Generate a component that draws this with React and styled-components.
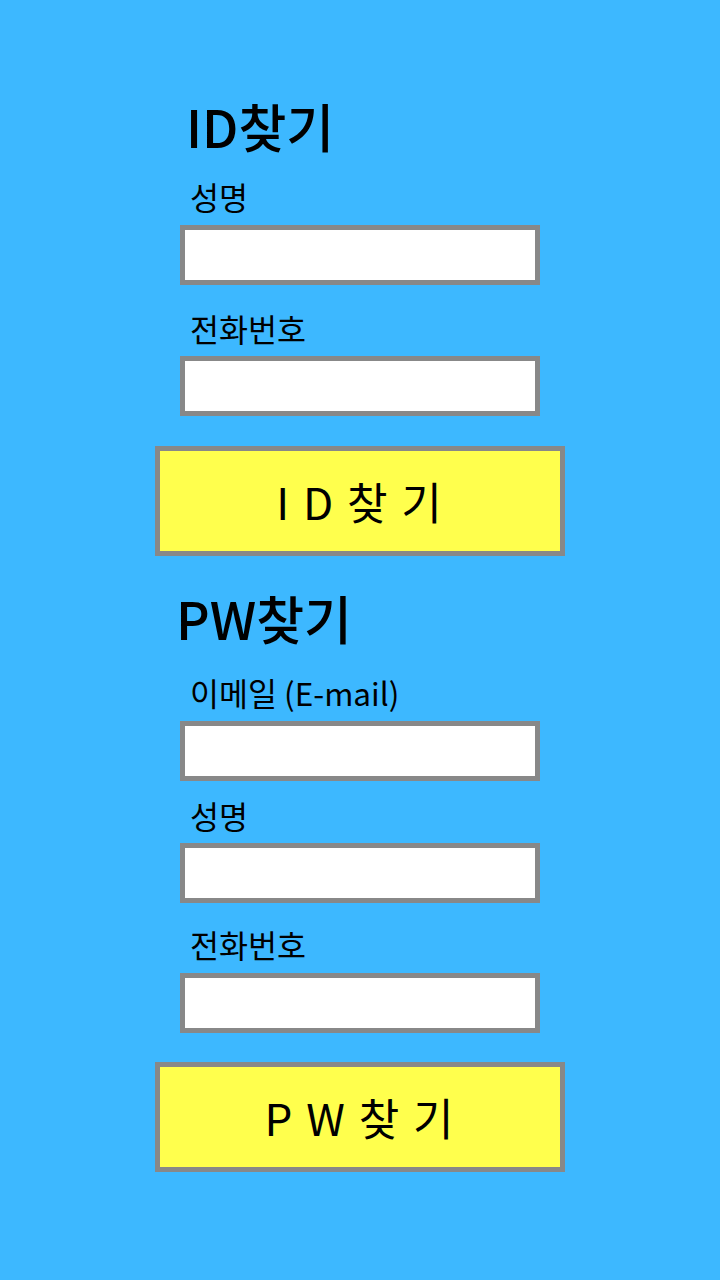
import React from "react";
import styled, { createGlobalStyle } from "styled-components";

const GlobalStyle = createGlobalStyle`
  html, body {
    margin: 0;
    padding: 0;
    background: #3db8ff;
  }
  body {
    font-family: "Noto Sans CJK KR", "Noto Sans", sans-serif;
    color: #000;
  }
`;

const Page = styled.main`
  min-height: 1280px;
  display: flex;
  flex-direction: column;
  align-items: center;
  padding-top: 100px;
  box-sizing: border-box;
`;

const Section = styled.section`
  width: 410px;
  display: flex;
  flex-direction: column;
  margin-top: ${({ $top }) => $top || 0}px;
`;

const Heading = styled.h2`
  margin: 0 0 0 ${({ $indent }) => $indent}px;
  font-size: 52px;
  font-weight: 500;
  line-height: 1;
`;

const Field = styled.div`
  display: flex;
  flex-direction: column;
  margin-top: ${({ $top }) => $top}px;
`;

const Label = styled.label`
  margin-left: 35px;
  font-size: 31.5px;
  line-height: 1;
`;

const Input = styled.input`
  align-self: center;
  width: 360px;
  height: 60px;
  margin-top: 12px;
  box-sizing: border-box;
  border: 5px solid #888;
  background: #fff;
  outline: none;
  font-size: 24px;
`;

const Button = styled.button`
  width: 410px;
  height: 110px;
  margin-top: ${({ $top }) => $top}px;
  box-sizing: border-box;
  border: 5px solid #888;
  background: #ffff4d;
  font-family: "Noto Sans CJK KR", "Noto Sans", sans-serif;
  font-size: 44px;
  color: #000;
  letter-spacing: 2px;
  cursor: pointer;
`;

export default function App() {
  return (
    <>
      <GlobalStyle />
      <Page>
        <Section>
          <Heading $indent={31}>ID찾기</Heading>
          <Field $top={29}>
            <Label>성명</Label>
            <Input type="text" />
          </Field>
          <Field $top={28}>
            <Label>전화번호</Label>
            <Input type="text" />
          </Field>
          <Button $top={30}>I D 찾 기</Button>
        </Section>
        <Section $top={36}>
          <Heading $indent={21}>PW찾기</Heading>
          <Field $top={33}>
            <Label>이메일 (E-mail)</Label>
            <Input type="email" />
          </Field>
          <Field $top={19}>
            <Label>성명</Label>
            <Input type="text" />
          </Field>
          <Field $top={26}>
            <Label>전화번호</Label>
            <Input type="text" />
          </Field>
          <Button $top={29}>P W 찾 기</Button>
        </Section>
      </Page>
    </>
  );
}
